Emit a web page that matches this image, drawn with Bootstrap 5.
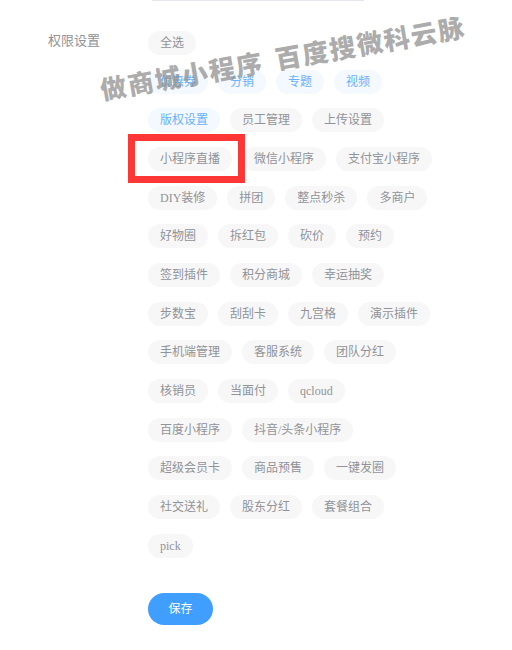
<!DOCTYPE html>
<html lang="zh">
<head>
<meta charset="utf-8">
<title>权限设置</title>
<link rel="stylesheet" href="https://cdn.jsdelivr.net/npm/bootstrap@5.3.0/dist/css/bootstrap.min.css">
<style>
html,body{height:650px;overflow:hidden;background:#fff}
body{font-family:"Liberation Serif","Noto Sans CJK SC",serif;font-size:12px;color:#909399}
.stage{position:relative;height:650px}
.topline{width:212px;height:1px;margin-left:152px;background:#e4e7ed}
.perm-row{padding:30px 0 0 48px}
.perm-label{width:100px;font-size:13px;line-height:20px;color:#909399;flex:none}
.chips{width:286px;row-gap:14.67px;column-gap:10px}
.chip{height:24px;line-height:24px;padding:0 12px;border-radius:12px;background:#f7f7f7;color:#909399;font-size:12px;white-space:nowrap}
.chip.on{background:#f4f9ff;color:#66b1ff}
.save-btn{width:65px;height:32px;margin:35px 0 0 148px;padding:0;border:0;border-radius:16px;background:#409eff;color:#fff;font-size:12px;line-height:32px}
.mark-box{position:absolute;left:128px;top:134px;width:117px;height:49px;border:7px solid #ff3636}
.wm{position:absolute;left:103px;top:74px;font-family:"Noto Sans CJK SC",sans-serif;font-weight:900;font-size:26px;line-height:30px;letter-spacing:1.5px;word-spacing:5px;color:rgba(140,140,140,.72);white-space:nowrap;transform:rotate(-9.9deg);transform-origin:0 100%}
</style>
</head>
<body>
<div class="stage">
  <div class="topline"></div>
  <div class="perm-row d-flex">
    <div class="perm-label">权限设置</div>
    <div class="chips d-flex flex-wrap">
      <div class="w-100 d-flex"><span class="chip">全选</span></div>
      <span class="chip on">优惠券</span><span class="chip on">分销</span><span class="chip on">专题</span><span class="chip on">视频</span>
      <span class="chip on">版权设置</span><span class="chip">员工管理</span><span class="chip">上传设置</span>
      <span class="chip">小程序直播</span><span class="chip">微信小程序</span><span class="chip">支付宝小程序</span>
      <span class="chip">DIY装修</span><span class="chip">拼团</span><span class="chip">整点秒杀</span><span class="chip">多商户</span>
      <span class="chip">好物圈</span><span class="chip">拆红包</span><span class="chip">砍价</span><span class="chip">预约</span>
      <span class="chip">签到插件</span><span class="chip">积分商城</span><span class="chip">幸运抽奖</span>
      <span class="chip">步数宝</span><span class="chip">刮刮卡</span><span class="chip">九宫格</span><span class="chip">演示插件</span>
      <span class="chip">手机端管理</span><span class="chip">客服系统</span><span class="chip">团队分红</span>
      <span class="chip">核销员</span><span class="chip">当面付</span><span class="chip">qcloud</span>
      <span class="chip">百度小程序</span><span class="chip">抖音/头条小程序</span>
      <span class="chip">超级会员卡</span><span class="chip">商品预售</span><span class="chip">一键发圈</span>
      <span class="chip">社交送礼</span><span class="chip">股东分红</span><span class="chip">套餐组合</span>
      <div class="w-100 d-flex"><span class="chip">pick</span></div>
    </div>
  </div>
  <button type="button" class="btn save-btn d-block">保存</button>
  <div class="mark-box"></div>
  <div class="wm">做商城小程序 百度搜微科云脉</div>
</div>
<script src="https://cdn.jsdelivr.net/npm/bootstrap@5.3.0/dist/js/bootstrap.bundle.min.js"></script>
</body>
</html>
